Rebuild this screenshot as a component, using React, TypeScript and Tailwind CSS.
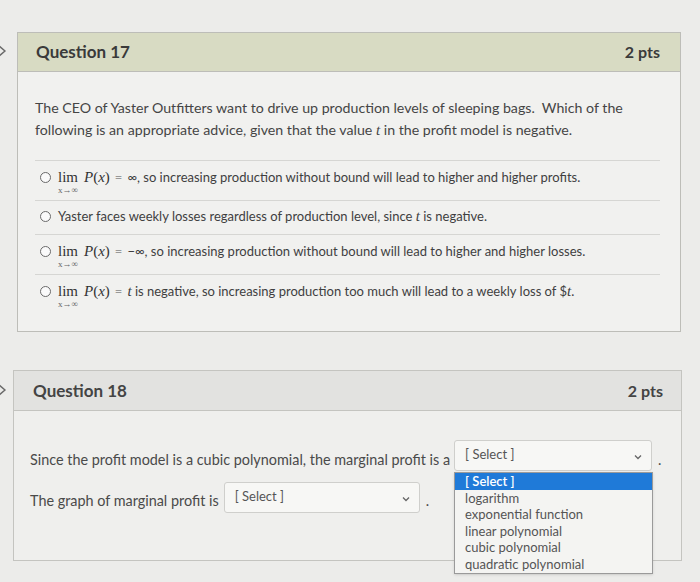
import React from "react";

function Chevron() {
  return (
    <svg width="12" height="16" viewBox="0 0 12 16" className="-ml-[4px] shrink-0">
      <path d="M2 2 L9 8 L2 14" fill="none" stroke="#6b6b6b" strokeWidth="1.6" strokeLinecap="round" strokeLinejoin="round" />
    </svg>
  );
}

function Radio() {
  return <span className="block w-[11px] h-[11px] rounded-full border border-[#6a6a6a] bg-[#fafafa] shrink-0" />;
}

function Lim() {
  return (
    <span className="inline-flex flex-col items-center leading-none mr-[6px]" style={{ fontFamily: "'Liberation Serif', serif" }}>
      <span className="text-[15px] text-[#333]">lim</span>
      <span className="text-[9px] text-[#666] mt-[1px]">x→∞</span>
    </span>
  );
}

function Px() {
  return (
    <span className="text-[15px] text-[#333]" style={{ fontFamily: "'Liberation Serif', serif" }}>
      <i>P</i>(<i>x</i>)
    </span>
  );
}

function T() {
  return <i style={{ fontFamily: "'Liberation Serif', serif" }} className="text-[15px]">t</i>;
}

function Option({ children, tall }: { children: React.ReactNode; tall?: boolean }) {
  return (
    <div className={`flex items-start gap-[7px] border-t border-[#d6d6d3] pl-[5px] ${tall ? "pt-[7px] h-[40px]" : "pt-[6px] h-[34px]"}`}>
      <div className="pt-[4px]"><Radio /></div>
      <div className="flex items-baseline text-[13px] leading-[18px] text-[#3f3f3f]">{children}</div>
    </div>
  );
}

function SelectBox({ w }: { w: string }) {
  return (
    <div className={`${w} h-[31px] border border-[#cfcfcc] bg-[#f7f7f5] rounded-[3px] flex items-start justify-between pl-[10px] pr-[8px] pt-[3px]`}>
      <span className="text-[13px] text-[#555]">[ Select ]</span>
      <svg width="10" height="10" viewBox="0 0 10 10" className="mt-[8px]">
        <path d="M2 3.5 L5 6.5 L8 3.5" fill="none" stroke="#666" strokeWidth="1.3" />
      </svg>
    </div>
  );
}

export default function App() {
  const items = ["logarithm", "exponential function", "linear polynomial", "cubic polynomial", "quadratic polynomial"];
  return (
    <div className="w-[700px] h-[582px] overflow-hidden bg-[#ececea] text-[#404040]" style={{ fontFamily: "Lato, 'Open Sans', sans-serif" }}>
      <div className="pt-[32px] flex items-start">
        <div className="w-[17px] pt-[11px]"><Chevron /></div>
        <div className="w-[664px] border border-[#bdbdb8] bg-[#f1f1ef]">
          <div className="h-[39px] bg-[#d8dbc3] border-b border-[#bdbdb8] flex items-center justify-between pl-[18px] pr-[20px]">
            <span className="text-[17px] font-bold text-[#3a3a3a]">Question 17</span>
            <span className="text-[16px] font-bold text-[#3a3a3a]">2 pts</span>
          </div>
          <div className="pl-[17px] pr-[20px] pt-[25px] h-[259px]">
            <p className="text-[14.2px] leading-[22px] text-[#454545]">
              The CEO of Yaster Outfitters want to drive up production levels of sleeping bags.&nbsp; Which of the following is an appropriate advice, given that the value <T /> in the profit model is negative.
            </p>
            <div className="mt-[19px]">
              <Option tall>
                <Lim />
                <Px />
                <span className="mx-[5px] text-[#999]">=</span>
                <span>∞, so increasing production without bound will lead to higher and higher profits.</span>
              </Option>
              <Option>
                <span>Yaster faces weekly losses regardless of production level, since <T /> is negative.</span>
              </Option>
              <Option tall>
                <Lim />
                <Px />
                <span className="mx-[5px] text-[#999]">=</span>
                <span>−∞, so increasing production without bound will lead to higher and higher losses.</span>
              </Option>
              <Option tall>
                <Lim />
                <Px />
                <span className="mx-[5px] text-[#999]">=</span>
                <span><T /> is negative, so increasing production too much will lead to a weekly loss of $<T />.</span>
              </Option>
            </div>
          </div>
        </div>
      </div>

      <div className="mt-[38px] flex items-start">
        <div className="w-[13px] pt-[12px]"><Chevron /></div>
        <div className="w-[669px] border border-[#c4c4c0] bg-[#efefed]">
          <div className="h-[40px] bg-[#e2e2e0] border-b border-[#c4c4c0] flex items-center justify-between pl-[19px] pr-[18px]">
            <span className="text-[17px] font-bold text-[#444]">Question 18</span>
            <span className="text-[16px] font-bold text-[#444]">2 pts</span>
          </div>
          <div className="pl-[16px] pt-[29px] pb-[47px] text-[14.4px] leading-[20px] text-[#4a4a4a]">
            <div className="flex items-start">
              <span className="pt-[10px]">Since the profit model is a cubic polynomial, the marginal profit is a</span>
              <div className="relative ml-[4px]">
                <SelectBox w="w-[198px]" />
                <div className="absolute left-0 top-[32px] w-[199px] border border-[#9a9a9a] bg-[#f4f4f2] text-[13px] leading-[16.6px] text-[#555] shadow-sm z-10">
                  <div className="bg-[#1f7ad8] text-white font-semibold px-[10px]">[ Select ]</div>
                  {items.map((it) => (
                    <div key={it} className="px-[10px]">{it}</div>
                  ))}
                </div>
              </div>
              <span className="ml-[6px] pt-[10px]">.</span>
            </div>
            <div className="flex items-start mt-[11px]">
              <span className="pt-[9px]">The graph of marginal profit is</span>
              <div className="ml-[5px]"><SelectBox w="w-[196px]" /></div>
              <span className="ml-[6px] pt-[9px]">.</span>
            </div>
          </div>
        </div>
      </div>
    </div>
  );
}
